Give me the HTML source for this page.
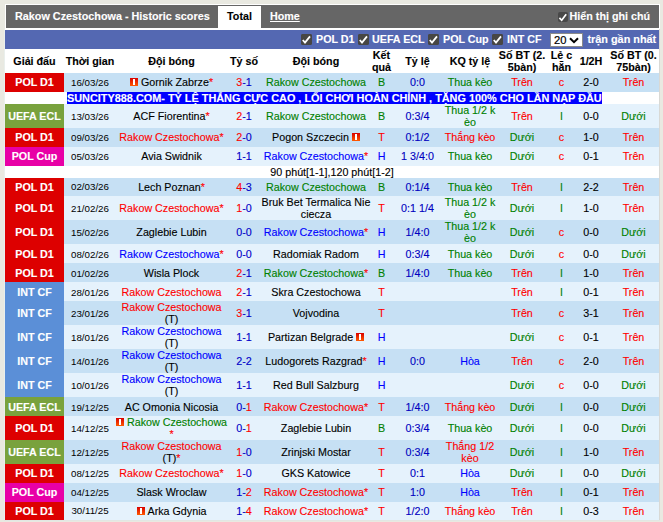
<!DOCTYPE html>
<html><head><meta charset="utf-8">
<style>
html,body{margin:0;padding:0}
body{width:663px;height:522px;overflow:hidden;position:relative;background:#e9e9e1;font-family:"Liberation Sans",sans-serif;font-size:10.72px;color:#000}
.hdr{position:absolute;left:5px;top:4px;width:653px;height:23px;border:1px solid #fff;background:#666666}
.title{position:absolute;left:9px;top:0;line-height:23px;color:#fff;font-weight:bold;white-space:nowrap;font-size:10.82px}
.tab{position:absolute;left:212px;top:1px;width:43px;height:23px;background:#fff;color:#000;font-weight:bold;text-align:center;line-height:21px}
.home{position:absolute;left:264px;top:0;line-height:23px;color:#fff;font-weight:bold;text-decoration:underline}
.note{position:absolute;right:9px;top:0;line-height:23px;color:#fff;font-weight:bold;white-space:nowrap}
.wrap{position:absolute;left:5px;top:29px;width:654px;height:491px;background:#fff}
.bar{position:absolute;left:5px;top:30px;width:654px;height:19px;background:#5468b2;color:#fff;font-weight:bold;white-space:nowrap}
.bi{position:absolute;top:0;line-height:19px}
.cb{position:absolute;width:11px;height:11px;background:#474644;border-radius:2px}
.cb svg{display:block}
.sel{position:absolute;left:545px;top:3px;width:31px;height:12px;background:#fff;border:1px solid #8a8a8a;color:#000;font-weight:normal;-webkit-text-stroke:0}
table{position:absolute;left:5px;top:49px;border-collapse:collapse;table-layout:fixed;width:654px}
td,th{padding:0;text-align:center;vertical-align:middle;line-height:12px;white-space:nowrap;overflow:visible}
th{font-weight:bold;background:#fff;height:24px}
tr.s td{padding-bottom:1px}
tr.d td{background:#c6e0f4}
tr.l td{background:#e5f2fc}
td.lg{color:#fff;font-weight:bold}
td.dt{font-size:9.75px;padding-top:2px;-webkit-text-stroke:0}
td.sc{color:#0000c8}
td.od{color:#0000c0}
td.hf{color:#000}
tr.d td:last-child,tr.l td:last-child,tr.hd th:last-child{padding-left:2px}
body{-webkit-text-stroke:0.12px}
.r{color:#ff0000} .g{color:#008000} .b{color:#0000ff}
.st{color:#ff0000}
tr.ad td{background:#fff}
td.adc{text-align:left}
.adt{background:#0000ff;color:#fff;font-weight:bold;display:inline-block;height:12px;line-height:12px;margin-left:3px;font-size:10.88px}
tr.nt td{background:#fff}
.ntx{position:relative;left:0}
.rc{display:inline-block;width:8px;height:8px;background:linear-gradient(#d80000,#ff5a00);position:relative;vertical-align:0;margin:0 3px 0 0}
.ra{margin:0 0 0 3px}
.rc::after{content:"";position:absolute;left:3px;top:1px;width:2px;height:6px;background:#fff}
.edgeL{position:absolute;left:4px;top:29px;width:1px;height:491px;background:#eaefec}
.edgeB{position:absolute;left:4px;top:520px;width:656px;height:1px;background:#e2e6e3}
.edgeR{position:absolute;left:659px;top:29px;width:1px;height:491px;background:#d9d9d5}
</style></head><body>
<div class="hdr">
 <div class="title">Rakow Czestochowa - Historic scores</div>
 <div class="tab">Total</div>
 <div class="home">Home</div>
 <div class="note">Hiển thị ghi chú</div>
 <i class="cb" style="left:552px;top:7px;width:10px;height:10px;background:#484848"><svg width="10" height="10" viewBox="0 0 10 10"><path d="M1.4 5.9 L3.7 8.3 L8.2 2.3" stroke="#fff" stroke-width="1.7" fill="none"/></svg></i>
</div>
<div class="wrap"></div>
<div class="edgeL"></div><div class="edgeR"></div><div class="edgeB"></div>
<div class="bar">
 <i class="cb" style="left:296px;top:4px"><i class="cb"><svg width="11" height="11" viewBox="0 0 11 11"><path d="M1.8 6 L4 8.6 L9 2.4" stroke="#fff" stroke-width="1.8" fill="none"/></svg></i></i><span class="bi" style="left:311px">POL D1</span>
 <i class="cb" style="left:353px;top:4px"><i class="cb"><svg width="11" height="11" viewBox="0 0 11 11"><path d="M1.8 6 L4 8.6 L9 2.4" stroke="#fff" stroke-width="1.8" fill="none"/></svg></i></i><span class="bi" style="left:367px">UEFA ECL</span>
 <i class="cb" style="left:423px;top:4px"><i class="cb"><svg width="11" height="11" viewBox="0 0 11 11"><path d="M1.8 6 L4 8.6 L9 2.4" stroke="#fff" stroke-width="1.8" fill="none"/></svg></i></i><span class="bi" style="left:438px">POL Cup</span>
 <i class="cb" style="left:487px;top:4px"><i class="cb"><svg width="11" height="11" viewBox="0 0 11 11"><path d="M1.8 6 L4 8.6 L9 2.4" stroke="#fff" stroke-width="1.8" fill="none"/></svg></i></i><span class="bi" style="left:502px">INT CF</span>
 <div class="sel"><span style="position:absolute;left:3px;top:0;line-height:12px;font-size:11.2px;-webkit-text-stroke:0.2px">20</span><svg style="position:absolute;left:18px;top:3px" width="10" height="7" viewBox="0 0 10 7"><path d="M1 1.2 L5 5.2 L9 1.2" stroke="#000" stroke-width="2" fill="none"/></svg></div>
 <span class="bi" style="left:582.5px;font-size:10.85px">trận gần nhất</span>
</div>
<table>
<colgroup><col style="width:59px"><col style="width:52px"><col style="width:111px"><col style="width:34px"><col style="width:110px"><col style="width:21px"><col style="width:51px"><col style="width:54px"><col style="width:50px"><col style="width:29px"><col style="width:30px"><col style="width:53px"></colgroup>
<tr class="hd"><th>Giải đấu</th><th>Thời gian</th><th>Đội bóng</th><th>Tỷ số</th><th>Đội bóng</th><th>Kết<br>quả</th><th>Tỷ lệ</th><th>KQ tỷ lệ</th><th>Số BT (2.<br>5bàn)</th><th>Lẻ c<br>hẵn</th><th>1/2H</th><th>Số BT (0.<br>75bàn)</th></tr>
<tr class="d s" style="height:19px"><td class="lg" style="background:#dd0000">POL D1</td><td class="dt">16/03/26</td><td><i class="rc"></i><span style="color:#000">Gornik Zabrze</span><span class="st">*</span></td><td class="sc"><span class="r">3</span>-1</td><td><span style="color:#008000">Rakow Czestochowa</span></td><td><span style="color:#008000">B</span></td><td class="od">0:0</td><td><span class="g">Thua kèo</span></td><td><span class="r">Trên</span></td><td><span class="r">c</span></td><td class="hf">2-0</td><td><span class="r">Trên</span></td></tr><tr style="height:12px" class="ad"><td></td><td colspan="11" class="adc"><span class="adt">SUNCITY888.COM- TỶ LỆ THẮNG CỰC CAO , LỐI CHƠI HOÀN CHỈNH , TẶNG 100% CHO LẦN NẠP ĐẦU</span></td></tr><tr class="l" style="height:24px"><td class="lg" style="background:#79a23d">UEFA ECL</td><td class="dt">13/03/26</td><td><span style="color:#000">ACF Fiorentina</span><span class="st">*</span></td><td class="sc"><span class="r">2</span>-1</td><td><span style="color:#008000">Rakow Czestochowa</span></td><td><span style="color:#008000">B</span></td><td class="od">0:3/4</td><td><span class="g">Thua 1/2 k<br>èo</span></td><td><span class="r">Trên</span></td><td><span class="g">l</span></td><td class="hf">0-0</td><td><span class="g">Dưới</span></td></tr><tr class="d s" style="height:19px"><td class="lg" style="background:#dd0000">POL D1</td><td class="dt">09/03/26</td><td><span style="color:#ff0000">Rakow Czestochowa</span><span class="st">*</span></td><td class="sc"><span class="r">2</span>-0</td><td><span style="color:#000">Pogon Szczecin</span><i class="rc ra"></i></td><td><span style="color:#ff0000">T</span></td><td class="od">0:1/2</td><td><span class="r">Thắng kèo</span></td><td><span class="g">Dưới</span></td><td><span class="r">c</span></td><td class="hf">1-0</td><td><span class="r">Trên</span></td></tr><tr class="l s" style="height:19px"><td class="lg" style="background:#e800a6">POL Cup</td><td class="dt">05/03/26</td><td><span style="color:#000">Avia Swidnik</span></td><td class="sc">1-1</td><td><span style="color:#0000ff">Rakow Czestochowa</span><span class="st">*</span></td><td><span style="color:#0000ff">H</span></td><td class="od">1 3/4:0</td><td><span class="g">Thua kèo</span></td><td><span class="g">Dưới</span></td><td><span class="r">c</span></td><td class="hf">0-1</td><td><span class="r">Trên</span></td></tr><tr style="height:12px" class="nt"><td colspan="12"><div class="ntx">90 phút[1-1],120 phút[1-2]</div></td></tr><tr class="d" style="height:18px"><td class="lg" style="background:#dd0000">POL D1</td><td class="dt" style="padding-top:0">02/03/26</td><td><span style="color:#000">Lech Poznan</span><span class="st">*</span></td><td class="sc"><span class="r">4</span>-3</td><td><span style="color:#008000">Rakow Czestochowa</span></td><td><span style="color:#008000">B</span></td><td class="od">0:1/4</td><td><span class="g">Thua kèo</span></td><td><span class="r">Trên</span></td><td><span class="g">l</span></td><td class="hf">2-2</td><td><span class="r">Trên</span></td></tr><tr class="l" style="height:24px"><td class="lg" style="background:#dd0000">POL D1</td><td class="dt">21/02/26</td><td><span style="color:#ff0000">Rakow Czestochowa</span><span class="st">*</span></td><td class="sc"><span class="r">1</span>-0</td><td><span style="color:#000">Bruk Bet Termalica Nie<br>ciecza</span></td><td><span style="color:#ff0000">T</span></td><td class="od">0:1 1/4</td><td><span class="g">Thua 1/2 k<br>èo</span></td><td><span class="g">Dưới</span></td><td><span class="g">l</span></td><td class="hf">1-0</td><td><span class="r">Trên</span></td></tr><tr class="d" style="height:24px"><td class="lg" style="background:#dd0000">POL D1</td><td class="dt">15/02/26</td><td><span style="color:#000">Zaglebie Lubin</span></td><td class="sc">0-0</td><td><span style="color:#0000ff">Rakow Czestochowa</span><span class="st">*</span></td><td><span style="color:#0000ff">H</span></td><td class="od">1/4:0</td><td><span class="g">Thua 1/2 k<br>èo</span></td><td><span class="g">Dưới</span></td><td><span class="r">c</span></td><td class="hf">0-0</td><td><span class="g">Dưới</span></td></tr><tr class="l" style="height:19px"><td class="lg" style="background:#dd0000">POL D1</td><td class="dt">08/02/26</td><td><span style="color:#0000ff">Rakow Czestochowa</span><span class="st">*</span></td><td class="sc">0-0</td><td><span style="color:#000">Radomiak Radom</span></td><td><span style="color:#0000ff">H</span></td><td class="od">0:3/4</td><td><span class="g">Thua kèo</span></td><td><span class="g">Dưới</span></td><td><span class="r">c</span></td><td class="hf">0-0</td><td><span class="g">Dưới</span></td></tr><tr class="d" style="height:19px"><td class="lg" style="background:#dd0000">POL D1</td><td class="dt">01/02/26</td><td><span style="color:#000">Wisla Plock</span></td><td class="sc"><span class="r">2</span>-1</td><td><span style="color:#008000">Rakow Czestochowa</span><span class="st">*</span></td><td><span style="color:#008000">B</span></td><td class="od">1/4:0</td><td><span class="g">Thua kèo</span></td><td><span class="r">Trên</span></td><td><span class="g">l</span></td><td class="hf">1-0</td><td><span class="r">Trên</span></td></tr><tr class="l" style="height:19px"><td class="lg" style="background:#5b8fd7">INT CF</td><td class="dt">28/01/26</td><td><span style="color:#ff0000">Rakow Czestochowa</span></td><td class="sc"><span class="r">2</span>-1</td><td><span style="color:#000">Skra Czestochowa</span></td><td><span style="color:#ff0000">T</span></td><td class="od"></td><td><span class=""></span></td><td><span class="r">Trên</span></td><td><span class="g">l</span></td><td class="hf">0-1</td><td><span class="r">Trên</span></td></tr><tr class="d" style="height:24px"><td class="lg" style="background:#5b8fd7">INT CF</td><td class="dt">23/01/26</td><td><span style="color:#ff0000">Rakow Czestochowa</span><br>(T)</td><td class="sc"><span class="r">3</span>-1</td><td><span style="color:#000">Vojvodina</span></td><td><span style="color:#ff0000">T</span></td><td class="od"></td><td><span class=""></span></td><td><span class="r">Trên</span></td><td><span class="r">c</span></td><td class="hf">3-1</td><td><span class="r">Trên</span></td></tr><tr class="l" style="height:24px"><td class="lg" style="background:#5b8fd7">INT CF</td><td class="dt">18/01/26</td><td><span style="color:#0000ff">Rakow Czestochowa</span><br>(T)</td><td class="sc">1-1</td><td><span style="color:#000">Partizan Belgrade</span><i class="rc ra"></i></td><td><span style="color:#0000ff">H</span></td><td class="od"></td><td><span class=""></span></td><td><span class="g">Dưới</span></td><td><span class="r">c</span></td><td class="hf">0-1</td><td><span class="r">Trên</span></td></tr><tr class="d" style="height:24px"><td class="lg" style="background:#5b8fd7">INT CF</td><td class="dt">14/01/26</td><td><span style="color:#0000ff">Rakow Czestochowa</span><br>(T)</td><td class="sc">2-2</td><td><span style="color:#000">Ludogorets Razgrad</span><span class="st">*</span></td><td><span style="color:#0000ff">H</span></td><td class="od">0:0</td><td><span class="b">Hòa</span></td><td><span class="r">Trên</span></td><td><span class="r">c</span></td><td class="hf">2-0</td><td><span class="r">Trên</span></td></tr><tr class="l" style="height:24px"><td class="lg" style="background:#5b8fd7">INT CF</td><td class="dt">10/01/26</td><td><span style="color:#0000ff">Rakow Czestochowa</span><br>(T)</td><td class="sc">1-1</td><td><span style="color:#000">Red Bull Salzburg</span></td><td><span style="color:#0000ff">H</span></td><td class="od"></td><td><span class=""></span></td><td><span class="g">Dưới</span></td><td><span class="r">c</span></td><td class="hf">0-0</td><td><span class="g">Dưới</span></td></tr><tr class="d" style="height:19px"><td class="lg" style="background:#79a23d">UEFA ECL</td><td class="dt">19/12/25</td><td><span style="color:#000">AC Omonia Nicosia</span></td><td class="sc">0-<span class="r">1</span></td><td><span style="color:#ff0000">Rakow Czestochowa</span><span class="st">*</span></td><td><span style="color:#ff0000">T</span></td><td class="od">1/4:0</td><td><span class="r">Thắng kèo</span></td><td><span class="g">Dưới</span></td><td><span class="g">l</span></td><td class="hf">0-0</td><td><span class="g">Dưới</span></td></tr><tr class="l" style="height:24px"><td class="lg" style="background:#dd0000">POL D1</td><td class="dt">14/12/25</td><td><i class="rc"></i><span style="color:#008000">Rakow Czestochowa</span><br><span class="st">*</span></td><td class="sc">0-<span class="r">1</span></td><td><span style="color:#000">Zaglebie Lubin</span></td><td><span style="color:#008000">B</span></td><td class="od">0:3/4</td><td><span class="g">Thua kèo</span></td><td><span class="g">Dưới</span></td><td><span class="g">l</span></td><td class="hf">0-0</td><td><span class="g">Dưới</span></td></tr><tr class="d" style="height:24px"><td class="lg" style="background:#79a23d">UEFA ECL</td><td class="dt">12/12/25</td><td><span style="color:#ff0000">Rakow Czestochowa</span><br>(T)<span class="st">*</span></td><td class="sc"><span class="r">1</span>-0</td><td><span style="color:#000">Zrinjski Mostar</span></td><td><span style="color:#ff0000">T</span></td><td class="od">0:3/4</td><td><span class="r">Thắng 1/2<br>kèo</span></td><td><span class="g">Dưới</span></td><td><span class="g">l</span></td><td class="hf">1-0</td><td><span class="r">Trên</span></td></tr><tr class="l s" style="height:19px"><td class="lg" style="background:#dd0000">POL D1</td><td class="dt">08/12/25</td><td><span style="color:#ff0000">Rakow Czestochowa</span><span class="st">*</span></td><td class="sc"><span class="r">1</span>-0</td><td><span style="color:#000">GKS Katowice</span></td><td><span style="color:#ff0000">T</span></td><td class="od">0:1</td><td><span class="b">Hòa</span></td><td><span class="g">Dưới</span></td><td><span class="g">l</span></td><td class="hf">0-0</td><td><span class="g">Dưới</span></td></tr><tr class="d s" style="height:19px"><td class="lg" style="background:#e800a6">POL Cup</td><td class="dt">04/12/25</td><td><span style="color:#000">Slask Wroclaw</span></td><td class="sc">1-<span class="r">2</span></td><td><span style="color:#ff0000">Rakow Czestochowa</span><span class="st">*</span></td><td><span style="color:#ff0000">T</span></td><td class="od">1:0</td><td><span class="b">Hòa</span></td><td><span class="r">Trên</span></td><td><span class="g">l</span></td><td class="hf">0-1</td><td><span class="r">Trên</span></td></tr><tr class="l" style="height:18px"><td class="lg" style="background:#dd0000">POL D1</td><td class="dt" style="padding-top:0">30/11/25</td><td><i class="rc"></i><span style="color:#000">Arka Gdynia</span></td><td class="sc">1-<span class="r">4</span></td><td><span style="color:#ff0000">Rakow Czestochowa</span><span class="st">*</span></td><td><span style="color:#ff0000">T</span></td><td class="od">1/2:0</td><td><span class="r">Thắng kèo</span></td><td><span class="r">Trên</span></td><td><span class="g">l</span></td><td class="hf">0-3</td><td><span class="r">Trên</span></td></tr>
</table>
</body></html>
